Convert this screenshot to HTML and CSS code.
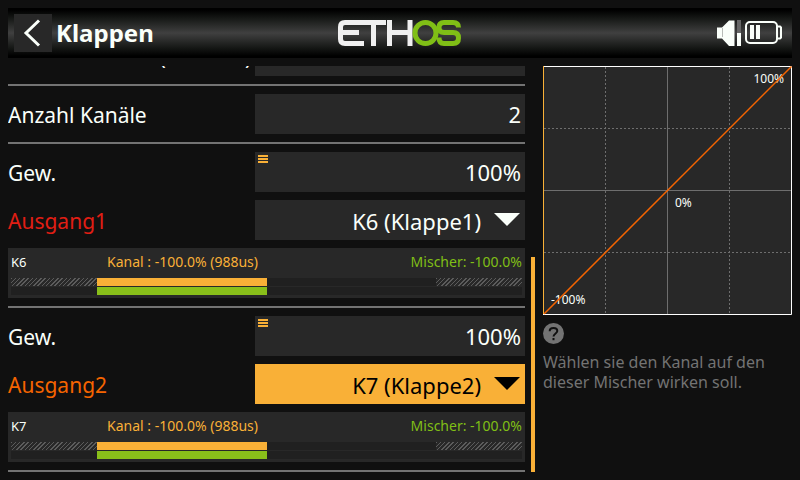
FILE: index.html
```html
<!DOCTYPE html>
<html lang="de">
<head>
<meta charset="utf-8">
<meta name="viewport" content="width=device-width, initial-scale=1">
<title>Klappen</title>
<link rel="stylesheet" href="styles.css">
</head>
<body>
<header class="topbar">
  <div class="topbar-left">
    <button class="back" type="button" aria-label="Zurück">
      <svg width="38" height="38" viewBox="0 0 38 38"><path d="M25 6.500L12 19l13 12.500" fill="none" stroke="#fafffa" stroke-width="3"/></svg>
    </button>
    <h1 class="title">Klappen</h1>
  </div>
  <svg class="logo" width="124" height="26" viewBox="0 0 124 26" role="img" aria-label="ETHOS">
    <g fill="none" stroke="#f0f0f0" stroke-width="5">
      <path d="M48 2.500H7Q2.500 2.500 2.500 7v12Q2.500 23.500 7 23.500H26M2.500 12.500H21"/>
      <path d="M35.500 2v24M51.500 0v26M72 0v26M51 12.500H72"/>
    </g>
    <g fill="none" stroke="#80bf16" stroke-width="5">
      <ellipse cx="87.500" cy="13" rx="10.500" ry="10.500"/>
      <path d="M120.500 7.500Q120.500 2.500 115 2.500H106Q101 2.500 101 7.500T106 12.500H115Q120.500 12.500 120.500 18T115 23.500H106Q101 23.500 101 17.500"/>
    </g>
  </svg>
  <div class="status">
    <svg width="24" height="26" viewBox="0 0 24 26" role="img" aria-label="Lautstärke">
      <path d="M0 7.500H5L12 .500H17.500V26H12L5 18.500H0Z" fill="#fafffa"/>
      <path d="M5.500 8v9" stroke="#b8bcb8" fill="none"/>
      <path d="M20 0h4v13h-4z" fill="#666"/>
      <path d="M20 13h4v13h-4z" fill="#fafffa"/>
    </svg>
    <svg class="battery" width="38" height="24" viewBox="0 0 38 24" role="img" aria-label="Akku">
      <rect x="1" y="1" width="31" height="21" rx="4" fill="none" stroke="#fafffa" stroke-width="2"/>
      <path d="M32 5.500h3l1 1v10l-1 1H32" fill="none" stroke="#fafffa" stroke-width="2"/>
      <path d="M5 4h4v14H5zM11 4h4v14h-4z" fill="#fafffa"/>
    </svg>
  </div>
</header>

<main class="content">
  <form class="list">
    <div class="row">
      <label for="slow">Zeit nach oben (Sekund.)</label>
      <div class="control"><input id="slow" type="text" value=""></div>
    </div>
    <hr>
    <div class="row">
      <label for="count">Anzahl Kanäle</label>
      <div class="control"><input id="count" type="text" value="2"></div>
    </div>
    <hr>
    <div class="row">
      <label for="weight1">Gew.</label>
      <div class="control"><input id="weight1" type="text" value="100%"><span class="menu-mark"></span></div>
    </div>
    <div class="row">
      <label class="alert" for="output1">Ausgang1</label>
      <div class="control">
        <select id="output1"><option>K6 (Klappe1)</option></select>
        <svg class="arrow" width="26" height="13" viewBox="0 0 26 13"><path d="M0 0h26L13 13z"/></svg>
      </div>
    </div>
    <section class="meter">
      <div class="meter-text"><span>K6</span><span class="output">Kanal : -100.0% (988us)</span><span class="mix">Mischer: -100.0%</span></div>
      <div class="bar"><i class="edge hatch"></i><i class="fill amber"></i><i class="fill"></i><i class="edge hatch"></i></div>
      <div class="bar"><i class="edge"></i><i class="fill green"></i><i class="fill"></i><i class="edge"></i></div>
    </section>
    <hr>
    <div class="row">
      <label for="weight2">Gew.</label>
      <div class="control"><input id="weight2" type="text" value="100%"><span class="menu-mark"></span></div>
    </div>
    <div class="row selected">
      <label for="output2">Ausgang2</label>
      <div class="control">
        <select id="output2"><option>K7 (Klappe2)</option></select>
        <svg class="arrow" width="26" height="13" viewBox="0 0 26 13"><path d="M0 0h26L13 13z"/></svg>
      </div>
    </div>
    <section class="meter">
      <div class="meter-text"><span>K7</span><span class="output">Kanal : -100.0% (988us)</span><span class="mix">Mischer: -100.0%</span></div>
      <div class="bar"><i class="edge hatch"></i><i class="fill amber"></i><i class="fill"></i><i class="edge hatch"></i></div>
      <div class="bar"><i class="edge"></i><i class="fill green"></i><i class="fill"></i><i class="edge"></i></div>
    </section>
    <hr>
  </form>
  <div class="scroll"><div class="thumb"></div></div>
  <aside class="side">
    <svg class="graph" viewBox="0 0 249 249" role="img" aria-label="Kurve">
      <rect width="249" height="249" fill="#282828"/>
      <g fill="none" stroke="#6e6e6e" shape-rendering="crispEdges">
        <path d="M124.500 0v249M0 124.500h249"/>
        <path d="M62.500 1v248M186.500 1v248M1 62.500h248M1 186.500h248" stroke-dasharray="2 2"/>
      </g>
      <path d="M0 .500H248.500V248.500H0" fill="none" stroke="#fff"/>
      <path d="M.500 0V248" stroke="#f9b037"/>
      <g fill="#fafffa" class="graph-text">
        <text x="241" y="17" text-anchor="end">100%</text>
        <text x="132" y="141">0%</text>
        <text x="8" y="238">-100%</text>
      </g>
      <path d="M1 248L248.500 .500" stroke="#f56400" stroke-width="1.500"/>
    </svg>
    <svg class="help-icon" width="21" height="21" viewBox="0 0 21 21" role="img" aria-label="Hilfe">
      <circle cx="10.500" cy="10.500" r="10.500" fill="#737373"/>
      <path d="M6.700 8.200Q6.700 5 10.500 5T14.300 8.100C14.300 10.500 10.500 10.500 10.500 13.600" fill="none" stroke="#101010" stroke-width="2"/>
      <path d="M9.500 15h2v2.200h-2z" fill="#101010"/>
    </svg>
    <p class="help">Wählen sie den Kanal auf den dieser Mischer wirken soll.</p>
  </aside>
</main>
</body>
</html>
```
FILE: styles.css
```css
* { box-sizing: border-box; }

body {
  margin: 0;
  height: 100vh;
  padding: 8px;
  display: flex;
  flex-direction: column;
  gap: 8px;
  background: #101010;
  color: #fafffa;
  font-family: "Noto Sans", sans-serif;
  font-size: 21px;
}

.topbar {
  flex: none;
  height: 50px;
  padding: 0 9px 0 6px;
  display: grid;
  grid-template-columns: 1fr auto 1fr;
  align-items: center;
  background: linear-gradient(#000 4%, #151715 20%, #404040 50%, #151715 80%, #000 96%);
}

.topbar-left { display: flex; align-items: center; gap: 4px; }
.back { width: 38px; height: 38px; padding: 0; border: 0; background: #282828; }
.back svg { display: block; }
.title { margin: 0; font-size: 24px; line-height: 38px; font-weight: 700; }
.logo { display: block; margin-left: 2px; }
.status { display: flex; justify-content: flex-end; align-items: center; gap: 4px; }

.content { flex: 1; min-height: 0; display: flex; }

.list {
  flex: 1;
  min-width: 0;
  overflow: hidden;
  display: flex;
  flex-direction: column;
  justify-content: flex-end;
  gap: 8px;
}
.list > * { flex: none; }

hr { width: 100%; height: 2px; margin: 0; border: 0; background: #737373; }

.row { display: grid; grid-template-columns: minmax(0, 1fr) 270px; align-items: center; }
.row label { padding-top: 2px; line-height: 38px; white-space: nowrap; }
.control { position: relative; height: 40px; }

input, select {
  display: block;
  width: 100%;
  height: 40px;
  border: 0;
  border-radius: 0;
  margin: 0;
  padding: 0 4px;
  appearance: none;
  outline: 0;
  background: #282828;
  color: #fafffa;
  font: 22px "Noto Sans", sans-serif;
  text-align: right;
  text-align-last: right;
}
select { padding-top: 2px; padding-right: 44px; }

.arrow { position: absolute; right: 5px; top: 13px; fill: #fafffa; pointer-events: none; }
.menu-mark {
  position: absolute;
  left: 3px;
  top: 3px;
  width: 10px;
  height: 8px;
  background: repeating-linear-gradient(#f9b037 0 2px, transparent 2px 3px);
}

.alert { color: #e11e14; }
.selected label { color: #f56400; }
.selected select { background: #f9b037; color: #000; }
.selected .arrow { fill: #000; }

.meter { height: 50px; padding: 0 3px; background: #282828; }
.meter-text {
  height: 30px;
  display: grid;
  grid-template-columns: 96px 1fr auto;
  line-height: 28px;
  font-size: 13px;
}
.output, .mix { font-size: 14px; }
.output { color: #f9b037; }
.mix { color: #80bf16; }
.bar { display: flex; height: 8px; margin-bottom: 1px; background: #202020; }
.edge { flex: 86; }
.fill { flex: 169; }
.hatch { background: repeating-linear-gradient(135deg, #5c5c5c 0 1px, #282828 1px 3px); }
.amber { background: #f9b037; }
.green { background: #89bf1a; }

.scroll { width: 4px; margin: 0 8px 0 6px; display: flex; align-items: flex-end; }
.thumb { width: 100%; height: 53%; background: #f9b037; }

.side { width: 249px; }
.graph { display: block; width: 100%; }
.graph-text { font-size: 12px; }
.help-icon { display: block; margin-top: 8px; }
.help { margin: 8px 0 0; font-size: 16px; line-height: 20px; color: #737373; }
```
